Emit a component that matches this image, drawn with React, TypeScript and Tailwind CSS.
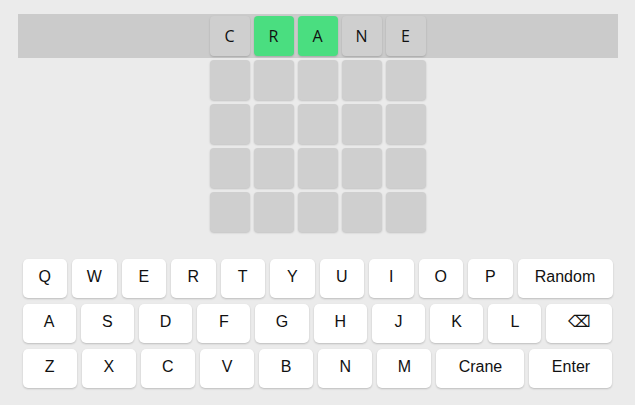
import React from "react";

const guess = ["C", "R", "A", "N", "E"];
const greens = [false, true, true, false, false];

function Tile({ ch, green }: { ch?: string; green?: boolean }) {
  return (
    <div
      className={`w-[40px] h-[40px] rounded-[4px] flex items-center justify-center text-[16px] text-[#111] shadow-[0_1px_2px_rgba(0,0,0,0.18)] ${
        green ? "bg-[#4ade80]" : "bg-[#cfcfcf]"
      }`}
      style={{ fontFamily: '"Open Sans", sans-serif' }}
    >
      {ch}
    </div>
  );
}

const wide: Record<string, string> = {
  Random: "w-[95px] shrink-0",
  "⌫": "w-[66px] shrink-0",
  Crane: "w-[88px] shrink-0",
  Enter: "w-[83px] shrink-0",
};

function Key({ label }: { label: string }) {
  return (
    <button
      className={`${wide[label] ?? "flex-1 min-w-0"} h-[39px] pb-[3px] rounded-[5px] bg-white text-[16px] text-[#111] shadow-[0_1px_2px_rgba(0,0,0,0.2)] flex items-center justify-center`}
    >
      {label}
    </button>
  );
}

const rows = [
  ["Q", "W", "E", "R", "T", "Y", "U", "I", "O", "P", "Random"],
  ["A", "S", "D", "F", "G", "H", "J", "K", "L", "⌫"],
  ["Z", "X", "C", "V", "B", "N", "M", "Crane", "Enter"],
];

export default function App() {
  return (
    <div
      className="w-[635px] h-[405px] bg-[#ebebeb] pt-[14px] overflow-hidden"
      style={{ fontFamily: '"Liberation Sans", Arial, sans-serif' }}
    >
      <div className="mx-auto w-[600px] bg-[#cbcbcb] py-[2px] flex justify-center gap-[4px]">
        {guess.map((c, i) => (
          <Tile key={i} ch={c} green={greens[i]} />
        ))}
      </div>
      <div className="mt-[2px] flex flex-col items-center gap-[4px]">
        {[0, 1, 2, 3].map((r) => (
          <div key={r} className="flex gap-[4px]">
            {[0, 1, 2, 3, 4].map((c) => (
              <Tile key={c} />
            ))}
          </div>
        ))}
      </div>
      <div className="mx-auto mt-[27px] w-[590px] flex flex-col gap-[6px]">
        {rows.map((row, i) => (
          <div key={i} className="flex gap-[5px]">
            {row.map((k) => (
              <Key key={k} label={k} />
            ))}
          </div>
        ))}
      </div>
    </div>
  );
}
